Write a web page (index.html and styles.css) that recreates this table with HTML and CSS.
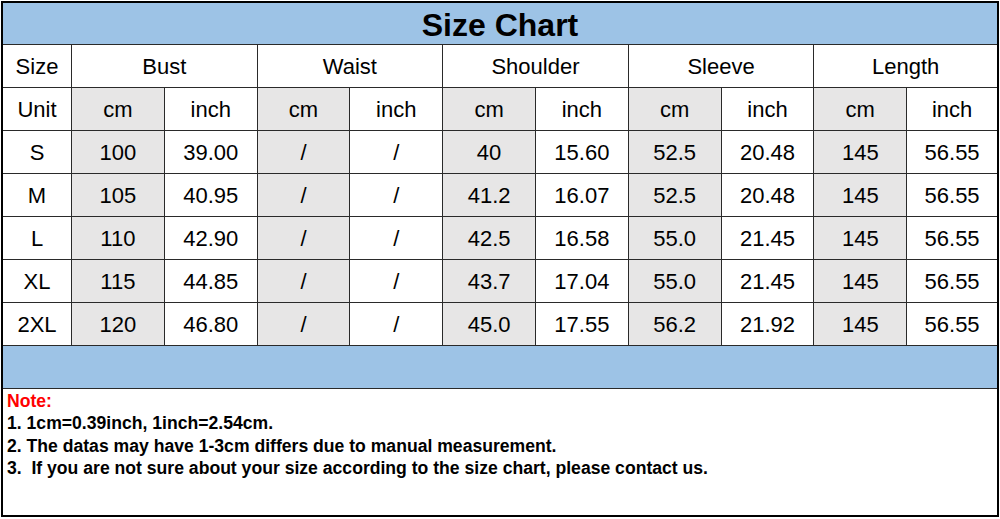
FILE: index.html
```html
<!DOCTYPE html>
<html>
<head>
<meta charset="utf-8">
<link rel="stylesheet" href="styles.css">
</head>
<body>
<div class="chart">
  <div class="cell title">Size Chart</div>

  <div class="cell">Size</div>
  <div class="cell span2">Bust</div>
  <div class="cell span2">Waist</div>
  <div class="cell span2">Shoulder</div>
  <div class="cell span2">Sleeve</div>
  <div class="cell span2">Length</div>

  <div class="cell">Unit</div>
  <div class="cell g">cm</div><div class="cell">inch</div>
  <div class="cell g">cm</div><div class="cell">inch</div>
  <div class="cell g">cm</div><div class="cell">inch</div>
  <div class="cell g">cm</div><div class="cell">inch</div>
  <div class="cell g">cm</div><div class="cell">inch</div>

  <div class="cell">S</div>
  <div class="cell g">100</div><div class="cell">39.00</div>
  <div class="cell g">/</div><div class="cell">/</div>
  <div class="cell g">40</div><div class="cell">15.60</div>
  <div class="cell g">52.5</div><div class="cell">20.48</div>
  <div class="cell g">145</div><div class="cell">56.55</div>

  <div class="cell">M</div>
  <div class="cell g">105</div><div class="cell">40.95</div>
  <div class="cell g">/</div><div class="cell">/</div>
  <div class="cell g">41.2</div><div class="cell">16.07</div>
  <div class="cell g">52.5</div><div class="cell">20.48</div>
  <div class="cell g">145</div><div class="cell">56.55</div>

  <div class="cell">L</div>
  <div class="cell g">110</div><div class="cell">42.90</div>
  <div class="cell g">/</div><div class="cell">/</div>
  <div class="cell g">42.5</div><div class="cell">16.58</div>
  <div class="cell g">55.0</div><div class="cell">21.45</div>
  <div class="cell g">145</div><div class="cell">56.55</div>

  <div class="cell">XL</div>
  <div class="cell g">115</div><div class="cell">44.85</div>
  <div class="cell g">/</div><div class="cell">/</div>
  <div class="cell g">43.7</div><div class="cell">17.04</div>
  <div class="cell g">55.0</div><div class="cell">21.45</div>
  <div class="cell g">145</div><div class="cell">56.55</div>

  <div class="cell">2XL</div>
  <div class="cell g">120</div><div class="cell">46.80</div>
  <div class="cell g">/</div><div class="cell">/</div>
  <div class="cell g">45.0</div><div class="cell">17.55</div>
  <div class="cell g">56.2</div><div class="cell">21.92</div>
  <div class="cell g">145</div><div class="cell">56.55</div>

  <div class="cell band"></div>

  <div class="note">
    <div class="note-head">Note:</div>
    <div>1. 1cm=0.39inch, 1inch=2.54cm.</div>
    <div>2. The datas may have 1-3cm differs due to manual measurement.</div>
    <div>3. &nbsp;If you are not sure about your size according to the size chart, please contact us.</div>
  </div>
</div>
</body>
</html>
```

FILE: styles.css
```css
html, body {
  margin: 0;
  padding: 0;
  background: #ffffff;
}

body {
  font-family: "Liberation Sans", Arial, sans-serif;
  color: #000;
}

.chart {
  margin: 1px 0 0 1px;
  width: 994px;
  border: 2px solid #000;
  background: #2a2a2a;
  display: grid;
  grid-template-columns: 68px repeat(9, 91.8px) 1fr;
  grid-template-rows: 41px repeat(7, 42px) 42px 126px;
  gap: 1px;
}

.cell {
  background: #fff;
  display: flex;
  align-items: center;
  justify-content: center;
  font-size: 22px;
  line-height: 1;
  padding-top: 2px;
}

.cell.g {
  background: #e7e6e6;
}

.span2 {
  grid-column: span 2;
}

.title {
  grid-column: 1 / -1;
  background: #9dc3e6;
  font-weight: bold;
  font-size: 32px;
  padding-top: 2px;
}

.band {
  grid-column: 1 / -1;
  background: #9dc3e6;
}

.note {
  grid-column: 1 / -1;
  background: #fff;
  padding: 1px 0 0 4px;
  font-size: 17.6px;
  font-weight: bold;
  line-height: 22.3px;
}

.note-head {
  color: #ff0000;
}
```
